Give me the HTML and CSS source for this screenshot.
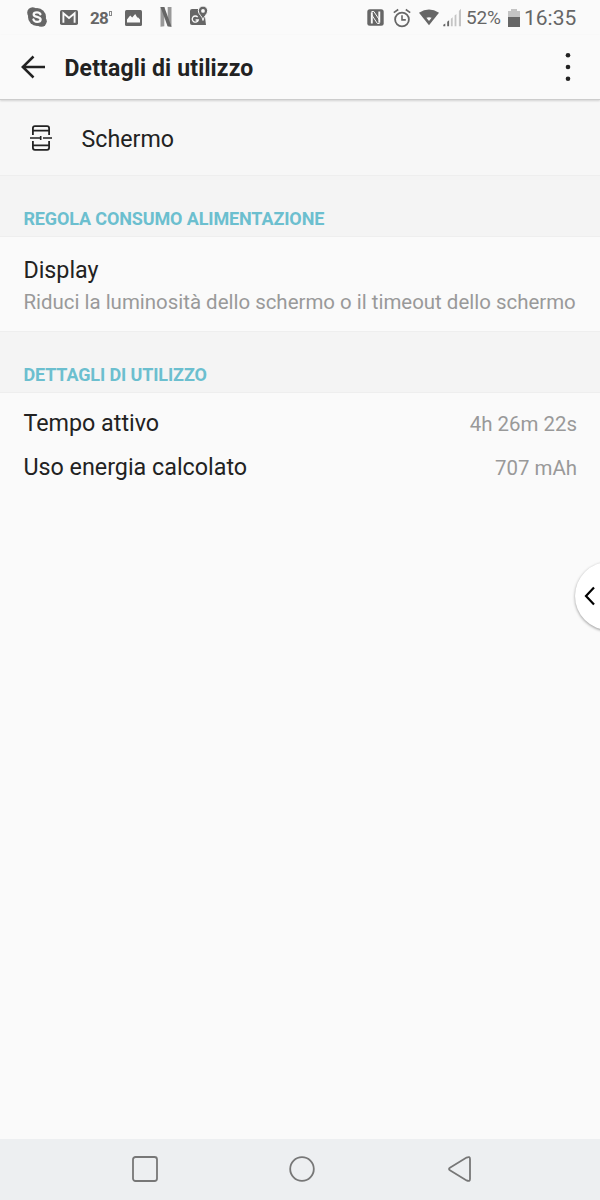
FILE: index.html
```
<!DOCTYPE html>
<html lang="it">
<head>
    <meta charset="utf-8">
    <title>Dettagli di utilizzo</title>
    <link rel="stylesheet" href="styles.css">
</head>
<body>
    <div class="statusbar">
        <div class="notifications">
            <svg class="skype" width="20" height="20" viewBox="0 0 20 20">
                <circle cx="10" cy="10" r="9" fill="#666"/>
                <circle cx="5.7" cy="5.7" r="5.5" fill="#666"/>
                <circle cx="14.3" cy="14.3" r="5.5" fill="#666"/>
                <path d="M13.4 7.200C12.800 5.700 11.500 5.300 10 5.300c-2 0-3.300.8-3.300 2.100 0 3.300 6.900 1.700 6.900 5 0 1.500-1.500 2.400-3.500 2.400-1.900 0-3.200-.8-3.700-2.300" fill="none" stroke="#fafafa" stroke-width="2.300" stroke-linecap="round"/>
            </svg>
            <svg class="gmail" width="18" height="15" viewBox="0 0 18 15">
                <rect width="18" height="15" rx="1.800" fill="#666"/>
                <path d="M3.400 12.700V3.200L9 8l5.600-4.800v9.500" fill="none" stroke="#fafafa" stroke-width="1.900"/>
            </svg>
            <span class="temperature">28<i></i></span>
            <svg class="gallery" width="17" height="16" viewBox="0 0 17 16">
                <rect width="17" height="16" rx="1.500" fill="#666"/>
                <path d="M2 12.500V9.500L5.200 5.500l2 2 3-3.500 2 3.500 1 0L15 9.500v3z" fill="#fafafa"/>
            </svg>
            <svg class="netflix" width="12" height="20" viewBox="0 0 12 20">
                <path d="M.5 0h3.800v19.300l-3.800.5zM7.700 0h3.800v19.800l-3.800-.5z" fill="#999"/>
                <path d="M.5 0h3.800l7.200 19.800-3.900-.5z" fill="#666"/>
            </svg>
            <svg class="maps" width="18" height="20" viewBox="0 0 18 20">
                <path d="M2 3h8.500l4.500 8 1 8H2a2 2 0 0 1-2-2V5a2 2 0 0 1 2-2z" fill="#666"/>
                <path d="M7.700 11.100a3.100 3.100 0 1 0 .6 2.900H5.600" fill="none" stroke="#fafafa" stroke-width="1.300"/>
                <path d="M13 14.500C12.500 10 8.300 8.500 8.300 4.800a4.700 4.700 0 0 1 9.400 0c0 3.700-4.200 5.200-4.700 9.700z" fill="#666" stroke="#fafafa" stroke-width="1"/>
                <circle cx="13" cy="4.900" r="1.900" fill="#fafafa"/>
            </svg>
        </div>
        <div class="system">
            <svg class="nfc" width="17" height="17" viewBox="0 0 17 17">
                <rect x=".3" y=".3" width="16.400" height="16.400" rx="2.500" fill="#666"/>
                <path d="M4.800 14.500V3.200M12.300 2.500v11.300" fill="none" stroke="#fafafa" stroke-width="1.900"/>
                <path d="M4.500 2.500h2.300l5.700 8.500M4.800 6l5.600 8.500h2.200" fill="none" stroke="#fafafa" stroke-width="1"/>
            </svg>
            <svg class="alarm" width="18" height="20" viewBox="0 0 18 20">
                <circle cx="9" cy="11.500" r="6.900" fill="none" stroke="#666" stroke-width="1.800"/>
                <path d="M9 7.300v4.600h3.800M.8 4.700l4.400-3.200M17.200 4.700l-4.400-3.200" fill="none" stroke="#666" stroke-width="1.600"/>
            </svg>
            <svg class="wifi" width="20" height="17" viewBox="0 0 20 17">
                <path d="M0 3.800Q10-2.800 20 3.800L10 16.300z" fill="#666"/>
                <path d="M7.400 8.800q2.600-1.300 5.200 0L10 11.900z" fill="#fafafa"/>
            </svg>
            <svg class="signal" width="19" height="19" viewBox="0 0 19 19">
                <path d="M.3 18.300v-1.500l2-1.200v2.700zM4.200 18.300v-4.500l1.900-1.500v6z" fill="#666"/>
                <path d="M7.900 18.300v-7.500l1.800-1.600v9.100zM11.600 18.300V7.500l1.800-1.600v12.400zM15.900 18.300V2.900L18 .8v17.500z" fill="#c4c4c4"/>
            </svg>
            <span class="percent">52%</span>
            <svg class="battery" width="12" height="18" viewBox="0 0 12 18">
                <path d="M3 0h6v2h3v6H0V2h3z" fill="#c4c4c4"/>
                <path d="M0 8h12v10H0z" fill="#666"/>
            </svg>
            <span class="clock">16:35</span>
        </div>
    </div>

    <div class="header">
        <svg class="back" width="26" height="24" viewBox="0 0 26 24">
            <path d="M13.500 1.500L2.800 12l10.700 10.500M3.200 12H25" fill="none" stroke="#222" stroke-width="2.500"/>
        </svg>
        <h1>Dettagli di utilizzo</h1>
        <svg class="more" width="6" height="30" viewBox="0 0 6 30">
            <circle cx="3" cy="3.200" r="2.300" fill="#222"/>
            <circle cx="3" cy="15" r="2.300" fill="#222"/>
            <circle cx="3" cy="26.700" r="2.300" fill="#222"/>
        </svg>
    </div>

    <div class="app">
        <svg width="22" height="26" viewBox="0 0 22 26">
            <path d="M2.900 10V3.200q0-2 2-2h12.200q2 0 2 2V10M2.900 16v6.800q0 2 2 2h12.200q2 0 2-2V16M3 5.700h16M3 20.300h16" fill="none" stroke="#222" stroke-width="1.800"/>
            <path d="M0 13h10.500M13 13h9M10.700 11v4" fill="none" stroke="#222" stroke-width="1.600"/>
        </svg>
        <span>Schermo</span>
    </div>

    <h2 class="section-first"><span>REGOLA CONSUMO ALIMENTAZIONE</span></h2>
    <div class="display">
        <div class="label">Display</div>
        <div class="summary">Riduci la luminosità dello schermo o il timeout dello schermo</div>
    </div>

    <h2 class="section-second"><span>DETTAGLI DI UTILIZZO</span></h2>
    <div class="details">
        <div class="row">
            <span class="label">Tempo attivo</span>
            <span class="value">4h 26m 22s</span>
        </div>
        <div class="row">
            <span class="label">Uso energia calcolato</span>
            <span class="value">707 mAh</span>
        </div>
    </div>

    <!-- floating handle, cut off by the right edge -->
    <div class="edge">
        <div class="handle">
            <svg width="12" height="20" viewBox="0 0 12 20">
                <path d="M10 1.500L2 10l8 8.500" fill="none" stroke="#000" stroke-width="2.200"/>
            </svg>
        </div>
    </div>

    <div class="navbar">
        <svg width="26" height="26" viewBox="0 0 26 26">
            <rect x="1" y="1" width="24" height="24" rx="2.500" fill="none" stroke="#777" stroke-width="1.800"/>
        </svg>
        <svg width="26" height="26" viewBox="0 0 26 26">
            <circle cx="13" cy="13" r="11.800" fill="none" stroke="#777" stroke-width="1.800"/>
        </svg>
        <svg width="26" height="26" viewBox="0 0 26 26">
            <path d="M4.300 11.400L20.600 1.600Q24 0 24 3v20q0 3-3.400 1.400L4.300 14.600Q1.700 13 4.300 11.400z" fill="none" stroke="#777" stroke-width="1.800"/>
        </svg>
    </div>
</body>
</html>
```
FILE: styles.css
```
* {
    box-sizing: border-box;
}
body {
    font-family: Roboto, sans-serif;
    background: #fafafa;
    color: #222;
    display: flex;
    flex-direction: column;
    height: 1200px;
    margin: 0;
    position: relative;
}
svg {
    display: block;
    flex-shrink: 0;
}
span, .label, .summary {
    white-space: nowrap;
}
.statusbar {
    display: flex;
    justify-content: space-between;
    height: 35px;
    padding: 0 24px 0 27px;
    color: #666;
}
.notifications, .system {
    display: flex;
    align-items: center;
    height: 35px;
}
.skype {
    margin-top: -1px;
}
.gmail {
    margin-left: 13px;
}
.temperature {
    display: flex;
    width: 22px;
    margin-left: 12px;
    font-size: 17px;
    font-weight: 700;
    letter-spacing: -0.7px;
}
.temperature i {
    flex-shrink: 0;
    width: 3px;
    height: 5px;
    margin: 3px 0 0 1px;
    border: 1px solid #888;
}
.gallery {
    margin-left: 13px;
}
.netflix {
    margin: -1px 0 0 18px;
}
.maps {
    margin: -4px 0 0 18px;
    overflow: visible;
}
.alarm {
    margin-left: 9px;
}
.wifi {
    margin-left: 8px;
}
.signal {
    margin-left: 4px;
}
.percent {
    width: 35px;
    margin-left: 4px;
    font-size: 19px;
    letter-spacing: -0.2px;
}
.battery {
    margin-left: 7px;
}
.clock {
    width: 52px;
    margin-left: 4px;
    font-size: 21px;
}
.header {
    display: flex;
    align-items: center;
    height: 65px;
    padding: 0 29.5px 0 20px;
    border-bottom: 1px solid #ccc;
    box-shadow: 0 1px 2px rgba(0,0,0,0.15);
    position: relative;
}
h1 {
    flex-grow: 1;
    margin: 2px 0 0 18.5px;
    font-size: 23px;
    font-weight: 700;
    letter-spacing: 0.14px;
}
.app {
    display: flex;
    align-items: center;
    height: 76px;
    padding: 0 0 0 30px;
    background: #f7f7f7;
    border-bottom: 1px solid #eee;
    font-size: 23.2px;
}
.app span {
    margin: 2px 0 0 29.6px;
}
h2 {
    display: flex;
    align-items: flex-end;
    margin: 0;
    padding: 0 23.4px 7px;
    background: #f4f4f4;
    border-bottom: 1px solid #eee;
    color: #6cbfcf;
    font-size: 18px;
    font-weight: 700;
    letter-spacing: -0.13px;
    line-height: 21px;
}
.section-first {
    height: 61px;
}
.display {
    height: 94px;
    padding: 19px 23.4px 0;
}
.label {
    font-size: 23.3px;
    line-height: 28px;
}
.summary {
    margin-top: 6px;
    color: #999;
    font-size: 20.45px;
    line-height: 24px;
}
.section-second {
    height: 62px;
    border-top: 1px solid #eee;
}
.details {
    flex-grow: 1;
    padding: 8px 23px 0 23.4px;
}
.row {
    display: flex;
    align-items: center;
    justify-content: space-between;
    height: 44px;
}
.value {
    margin-top: 2px;
    color: #999;
    font-size: 20.45px;
}
.edge {
    position: absolute;
    top: 558px;
    right: 0;
    width: 29px;
    height: 78px;
    padding: 4px 0 0 4px;
    overflow: hidden;
}
.handle {
    width: 68px;
    height: 68px;
    padding: 24px 0 0 9px;
    background: #fff;
    border-radius: 50%;
    box-shadow: 0 1px 3px rgba(0,0,0,0.4);
}
.navbar {
    display: flex;
    justify-content: space-between;
    height: 61px;
    padding: 17px 128px 0 132px;
    background: #edeff1;
}
```
